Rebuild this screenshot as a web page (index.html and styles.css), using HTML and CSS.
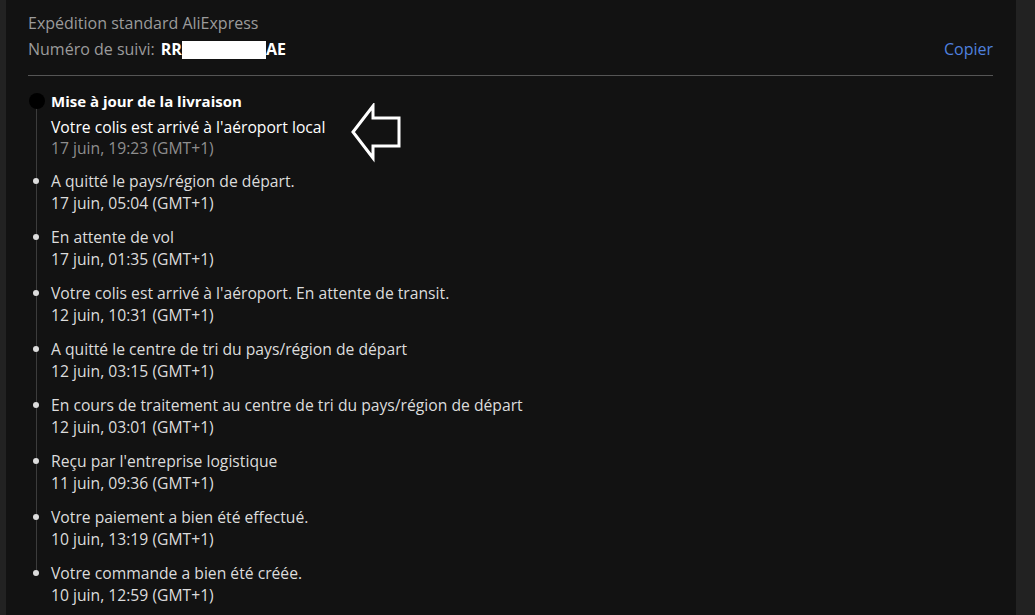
FILE: index.html
```html
<!DOCTYPE html>
<html lang="fr">
<head>
    <meta charset="UTF-8">
    <meta name="viewport" content="width=device-width, initial-scale=1.0">
    <title>Suivi de colis</title>
    <link rel="stylesheet" href="styles.css">
</head>
<body>
    <div class="panel">
        <div class="shipping">
            <div class="carrier">Expédition standard AliExpress</div>
            <div class="tracking-row">
                <div class="tracking">
                    <span class="label">Numéro de suivi:</span>
                    <span class="number">RR<span class="hidden-part"></span>AE</span>
                </div>
                <a class="copy" href="#">Copier</a>
            </div>
        </div>

        <ul class="timeline">
            <li class="event current">
                <div class="title">Mise à jour de la livraison</div>
                <div class="detail">Votre colis est arrivé à l'aéroport local</div>
                <div class="date">17 juin, 19:23 (GMT+1)</div>
                <svg class="pointer" width="54" height="60" viewBox="0 0 54 60">
                    <polygon points="3,29 23,3 23,15 49,15 49,43 23,43 23,55" fill="none" stroke="#fff" stroke-width="3" stroke-linejoin="miter"/>
                </svg>
            </li>
            <li class="event">
                <div class="title">A quitté le pays/région de départ.</div>
                <div class="date">17 juin, 05:04 (GMT+1)</div>
            </li>
            <li class="event">
                <div class="title">En attente de vol</div>
                <div class="date">17 juin, 01:35 (GMT+1)</div>
            </li>
            <li class="event">
                <div class="title">Votre colis est arrivé à l'aéroport. En attente de transit.</div>
                <div class="date">12 juin, 10:31 (GMT+1)</div>
            </li>
            <li class="event">
                <div class="title">A quitté le centre de tri du pays/région de départ</div>
                <div class="date">12 juin, 03:15 (GMT+1)</div>
            </li>
            <li class="event">
                <div class="title">En cours de traitement au centre de tri du pays/région de départ</div>
                <div class="date">12 juin, 03:01 (GMT+1)</div>
            </li>
            <li class="event">
                <div class="title">Reçu par l'entreprise logistique</div>
                <div class="date">11 juin, 09:36 (GMT+1)</div>
            </li>
            <li class="event">
                <div class="title">Votre paiement a bien été effectué.</div>
                <div class="date">10 juin, 13:19 (GMT+1)</div>
            </li>
            <li class="event">
                <div class="title">Votre commande a bien été créée.</div>
                <div class="date">10 juin, 12:59 (GMT+1)</div>
            </li>
        </ul>
    </div>
</body>
</html>
```
FILE: styles.css
```css
body {
    margin: 0;
    background-color: #222;
    font-family: "Open Sans", "Liberation Sans", sans-serif;
    font-size: 16px;
    line-height: 22px;
    color: #dcdcdc;
    height: 615px;
    overflow: hidden;
    display: flex;
}
.panel {
    margin-left: 6px;
    width: 1010px;
    background-color: #121212;
    padding: 12px 23px 0 22px;
    box-sizing: border-box;
}
.shipping {
    border-bottom: 1px solid #555;
    padding-bottom: 15px;
}
.carrier {
    color: #9b9b9b;
}
.tracking-row {
    display: flex;
    justify-content: space-between;
    align-items: center;
    margin-top: 4px;
}
.tracking .label {
    color: #9b9b9b;
}
.number {
    margin-left: 2px;
    color: #fff;
    font-weight: bold;
}
.hidden-part {
    display: inline-block;
    width: 84px;
    height: 18px;
    background-color: #fff;
    vertical-align: -4px;
}
.copy {
    color: #4f80de;
    text-decoration: none;
}

/* timeline */
.timeline {
    list-style: none;
    margin: 14px 0 0;
    padding: 0;
    font-size: 15.7px;
}
.event {
    position: relative;
    padding: 0 0 12px 23px;
}
.event::before {
    content: "";
    position: absolute;
    left: 5px;
    top: 8px;
    width: 6px;
    height: 6px;
    border-radius: 50%;
    background-color: #dcdcdc;
    z-index: 1;
}
.event::after {
    content: "";
    position: absolute;
    left: 8px;
    top: 11px;
    bottom: -11px;
    width: 1px;
    background-color: #3c3c3c;
}
.event:last-child::after {
    display: none;
}
.event.current {
    padding-bottom: 11px;
}
.event.current::before {
    left: 1px;
    top: 3px;
    width: 16px;
    height: 16px;
    background-color: #000;
}
.current .title {
    color: #fff;
    font-weight: bold;
    font-size: 15px;
}
.current .detail {
    color: #fff;
    margin-top: 4px;
}
.current .date {
    color: #8e8e8e;
    line-height: 21px;
}
.pointer {
    position: absolute;
    left: 322px;
    top: 13px;
}
```
